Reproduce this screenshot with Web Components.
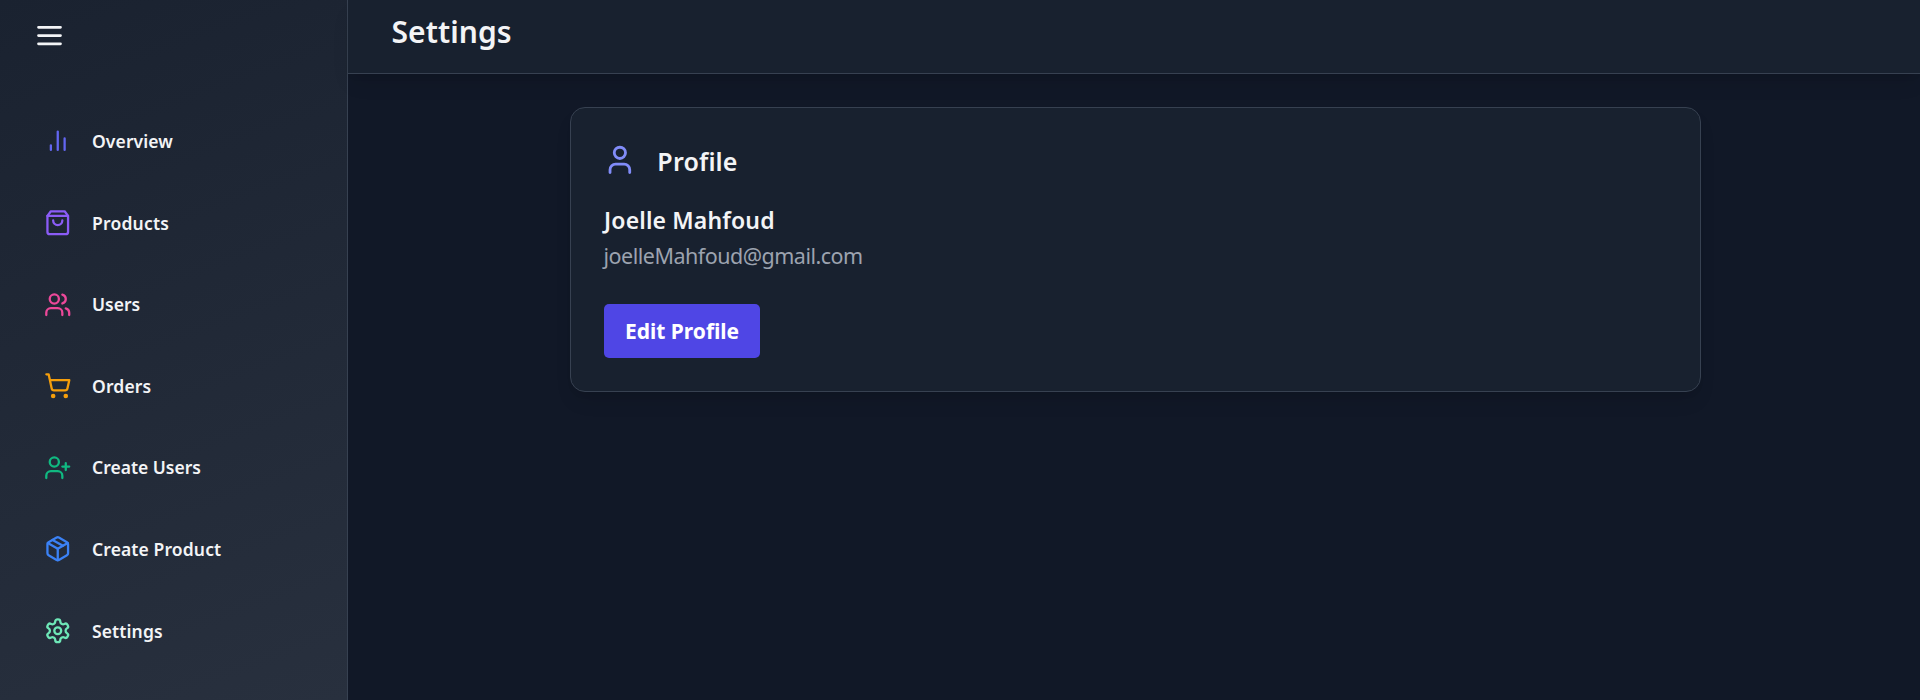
<!DOCTYPE html>
<html lang="en">
<head>
<meta charset="utf-8">
<title>Settings</title>
<style>
html, body { margin: 0; height: 100%; overflow: hidden; background: #111827; }
body { font-family: "Noto Sans", "Open Sans", sans-serif; color: #f3f4f6; }
</style>
</head>
<body>
<dashboard-shell>
  <side-bar slot="sidebar">
    <nav-item icon="chart" tint="#6366f1" style="letter-spacing:.1px">Overview</nav-item>
    <nav-item icon="bag" tint="#8b5cf6" style="letter-spacing:.2px">Products</nav-item>
    <nav-item icon="users" tint="#ec4899" style="letter-spacing:0">Users</nav-item>
    <nav-item icon="cart" tint="#f59e0b" style="letter-spacing:.15px">Orders</nav-item>
    <nav-item icon="userplus" tint="#10b981" style="letter-spacing:0">Create Users</nav-item>
    <nav-item icon="package" tint="#3b82f6" style="letter-spacing:.12px">Create Product</nav-item>
    <nav-item icon="gear" tint="#6ee7b7" style="letter-spacing:.12px">Settings</nav-item>
  </side-bar>
  <page-header>Settings</page-header>
  <profile-card name="Joelle Mahfoud" email="joelleMahfoud@gmail.com">Profile</profile-card>
</dashboard-shell>
<script>
const ICONS = {
  menu: '<path d="M4 6h16M4 12h16M4 18h16"/>',
  chart: '<path d="M18 20V10M12 20V4M6 20v-4"/>',
  bag: '<path d="M6 2 3 6v14a2 2 0 0 0 2 2h14a2 2 0 0 0 2-2V6l-3-4Z"/><path d="M3 6h18"/><path d="M16 10a4 4 0 0 1-8 0"/>',
  users: '<path d="M16 21v-2a4 4 0 0 0-4-4H6a4 4 0 0 0-4 4v2"/><circle cx="9" cy="7" r="4"/><path d="M22 21v-2a4 4 0 0 0-3-3.87"/><path d="M16 3.13a4 4 0 0 1 0 7.75"/>',
  cart: '<circle cx="8" cy="21" r="1"/><circle cx="19" cy="21" r="1"/><path d="M2.05 2.05h2l2.66 12.42a2 2 0 0 0 2 1.58h9.78a2 2 0 0 0 1.95-1.57l1.65-7.43H5.12"/>',
  userplus: '<path d="M16 21v-2a4 4 0 0 0-4-4H6a4 4 0 0 0-4 4v2"/><circle cx="9" cy="7" r="4"/><path d="M19 8v6M22 11h-6"/>',
  package: '<path d="m7.5 4.27 9 5.15"/><path d="M21 8a2 2 0 0 0-1-1.73l-7-4a2 2 0 0 0-2 0l-7 4A2 2 0 0 0 3 8v8a2 2 0 0 0 1 1.73l7 4a2 2 0 0 0 2 0l7-4A2 2 0 0 0 21 16Z"/><path d="m3.3 7 8.7 5 8.7-5"/><path d="M12 22V12"/>',
  gear: '<path d="M12.22 2h-.44a2 2 0 0 0-2 2v.18a2 2 0 0 1-1 1.73l-.43.25a2 2 0 0 1-2 0l-.15-.08a2 2 0 0 0-2.73.73l-.22.38a2 2 0 0 0 .73 2.73l.15.1a2 2 0 0 1 1 1.72v.51a2 2 0 0 1-1 1.74l-.15.09a2 2 0 0 0-.73 2.73l.22.38a2 2 0 0 0 2.73.73l.15-.08a2 2 0 0 1 2 0l.43.25a2 2 0 0 1 1 1.73V20a2 2 0 0 0 2 2h.44a2 2 0 0 0 2-2v-.18a2 2 0 0 1 1-1.73l.43-.25a2 2 0 0 1 2 0l.15.08a2 2 0 0 0 2.73-.73l.22-.39a2 2 0 0 0-.73-2.73l-.15-.08a2 2 0 0 1-1-1.74v-.5a2 2 0 0 1 1-1.74l.15-.09a2 2 0 0 0 .73-2.73l-.22-.38a2 2 0 0 0-2.73-.73l-.15.08a2 2 0 0 1-2 0l-.43-.25a2 2 0 0 1-1-1.73V4a2 2 0 0 0-2-2z"/><circle cx="12" cy="12" r="3"/>',
  user: '<path d="M19 21v-2a4 4 0 0 0-4-4H9a4 4 0 0 0-4 4v2"/><circle cx="12" cy="7" r="4"/>'
};

class LineIcon extends HTMLElement {
  connectedCallback() {
    this.attachShadow({ mode: 'open' }).innerHTML = `
      <style>:host{display:block;flex:none} svg{display:block;width:100%;height:100%}</style>
      <svg viewBox="0 0 24 24" fill="none" stroke="currentColor" stroke-width="2" stroke-linecap="round" stroke-linejoin="round">${ICONS[this.getAttribute('name')]}</svg>`;
  }
}
customElements.define('line-icon', LineIcon);

class DashboardShell extends HTMLElement {
  connectedCallback() {
    this.attachShadow({ mode: 'open' }).innerHTML = `
      <style>
        :host{display:flex;height:100vh;overflow:hidden;background:#111827}
        main{flex:1;min-width:0;display:flex;flex-direction:column}
      </style>
      <slot name="sidebar"></slot><main><slot></slot></main>`;
  }
}
customElements.define('dashboard-shell', DashboardShell);

class SideBar extends HTMLElement {
  connectedCallback() {
    this.attachShadow({ mode: 'open' }).innerHTML = `
      <style>
        :host{display:block;box-sizing:border-box;width:348px;flex:none;height:100%;
          border-right:1px solid #374151;background:linear-gradient(160deg,#1a2230,#28303e)}
        button{display:block;border:0;margin:0;background:none;color:#f3f4f6;padding:18.7px 0 0 32.8px}
        line-icon{width:33px;height:33px}
        nav{display:flex;flex-direction:column;padding-top:48.7px}
      </style>
      <button aria-label="Menu"><line-icon name="menu"></line-icon></button>
      <nav><slot></slot></nav>`;
  }
}
customElements.define('side-bar', SideBar);

class NavItem extends HTMLElement {
  connectedCallback() {
    this.attachShadow({ mode: 'open' }).innerHTML = `
      <style>
        :host{display:flex;align-items:center;height:81.6px;padding-left:43.75px;
          font-size:17.5px;font-weight:600;line-height:25px;white-space:nowrap}
        line-icon{width:27.5px;height:27.5px;margin-right:20.75px;color:${this.getAttribute('tint')}}
        span{padding-top:.8px}
      </style>
      <line-icon name="${this.getAttribute('icon')}"></line-icon><span><slot></slot></span>`;
  }
}
customElements.define('nav-item', NavItem);

class PageHeader extends HTMLElement {
  connectedCallback() {
    this.attachShadow({ mode: 'open' }).innerHTML = `
      <style>
        :host{display:block;box-sizing:border-box;height:74px;flex:none;padding:11.5px 0 0 43.5px;
          background:#18212f;border-bottom:1px solid #374151;
          box-shadow:0 12px 19px -4px rgba(0,0,0,.1),0 5px 8px -5px rgba(0,0,0,.1)}
        h1{margin:0;font-size:30px;line-height:40px;font-weight:600;letter-spacing:.07px}
      </style>
      <h1><slot></slot></h1>`;
  }
}
customElements.define('page-header', PageHeader);

class ProfileCard extends HTMLElement {
  connectedCallback() {
    this.attachShadow({ mode: 'open' }).innerHTML = `
      <style>
        :host{display:block;box-sizing:border-box;width:1131px;height:285px;margin:33px 0 0 222px;
          padding:32px 32.5px;background:#18212f;border:1px solid #374151;border-radius:15px;
          box-shadow:0 12px 19px -4px rgba(0,0,0,.1),0 5px 8px -5px rgba(0,0,0,.1)}
        header{display:flex;align-items:center;height:40px}
        line-icon{width:33.75px;height:33.75px;margin:0 20.5px 1.2px -.4px;color:#818cf8}
        h2{margin:0;font-size:25px;line-height:35px;font-weight:600;letter-spacing:.15px;padding-top:2.6px}
        h3{margin:24.8px 0 0 .6px;font-size:23px;line-height:31px;font-weight:600;letter-spacing:.15px}
        p{margin:5px 0 0;font-size:21.5px;line-height:30px;color:#9ca3af;letter-spacing:-.5px}
        button{display:block;box-sizing:border-box;width:156px;height:54px;margin:33.2px 0 0 .5px;padding:1px 0 0;border:0;
          border-radius:5px;background:#4f46e5;color:#fff;font:700 21px/30px "Noto Sans","Open Sans",sans-serif}
      </style>
      <header><line-icon name="user"></line-icon><h2><slot></slot></h2></header>
      <h3>${this.getAttribute('name')}</h3>
      <p>${this.getAttribute('email')}</p>
      <button>Edit Profile</button>`;
  }
}
customElements.define('profile-card', ProfileCard);
</script>
</body>
</html>
